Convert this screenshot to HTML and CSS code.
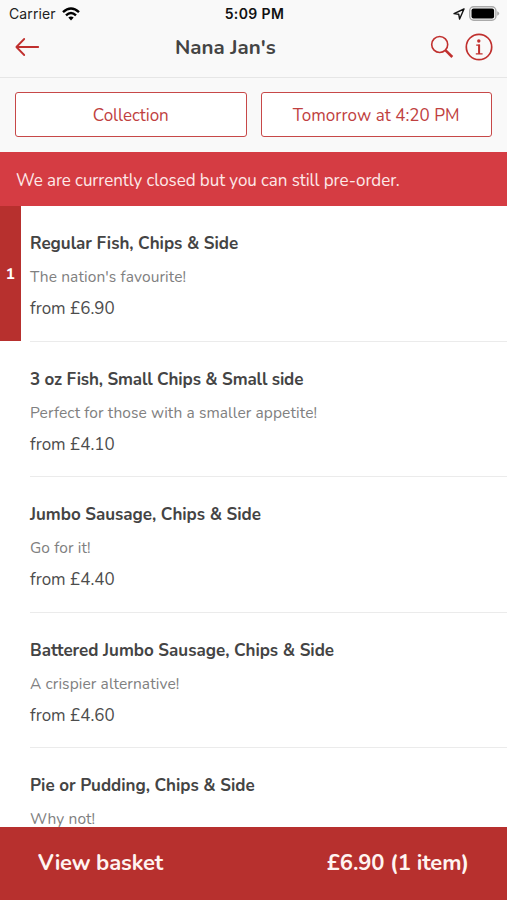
FILE: index.html
```html
<!DOCTYPE html>
<html lang="en">
<head>
<meta charset="utf-8">
<meta name="viewport" content="width=device-width, initial-scale=1">
<title>Nana Jan's</title>
<link rel="stylesheet" href="styles.css">
</head>
<body>
<div class="app">
  <header class="header">
    <div class="status">
      <div class="status-left">
        <span class="carrier">Carrier</span>
        <svg class="wifi" width="18" height="14" viewBox="0 0 18 14" fill="none" stroke="#000" stroke-width="2.4"><path d="M1 5.2Q9-2.4 17 5.2M4 8.3Q9 3.6 14 8.3"/><path d="M6.3 10.6Q9 8.4 11.7 10.6L9 13.4Z" fill="#000" stroke="none"/></svg>
      </div>
      <span class="time">5:09 PM</span>
      <div class="status-right">
        <svg width="12" height="12" viewBox="0 0 12 12" fill="none" stroke="#111" stroke-width="1.4" stroke-linejoin="round"><path d="M11 1L1 5.6L5.7 6.2L6.6 11Z"/></svg>
        <svg width="31" height="15" viewBox="0 0 31 15"><rect x=".7" y=".7" width="26.2" height="13.6" rx="4" fill="#fafafa" stroke="#aaa" stroke-width="1.4"/><rect x="2.5" y="2.5" width="22.6" height="10" rx="2" fill="#000"/><path d="M28.2 5.2Q30.2 6 30.2 7.5T28.2 9.8Z" fill="#aaa"/></svg>
      </div>
    </div>
    <nav class="nav">
      <svg class="back" width="26" height="20" viewBox="0 0 26 20" fill="none" stroke="#c0302e" stroke-width="1.8" stroke-linecap="round" stroke-linejoin="round"><path d="M23.2 10H1.8M9.2 2L1.4 10L9.2 18"/></svg>
      <h1 class="title">Nana Jan's</h1>
      <div class="actions">
        <svg width="24" height="24" viewBox="0 0 24 24" fill="none" stroke="#c0302e"><circle cx="9.7" cy="9.5" r="8" stroke-width="1.6"/><path d="M15.6 15.4L22.3 22" stroke-width="2.6"/></svg>
        <svg width="28" height="28" viewBox="0 0 28 28" fill="none" stroke="#c0302e"><circle cx="14" cy="14" r="12.7" stroke-width="1.7"/><circle cx="13.8" cy="8" r="1.7" fill="#c0302e" stroke="none"/><path d="M11.2 12.1H14.3V20.4M10.8 20.8H17.6" stroke-width="1.3"/><path d="M14.1 11.6V20.6" stroke-width="2"/></svg>
      </div>
    </nav>
  </header>
  <div class="options">
    <button class="option">Collection</button>
    <button class="option slot">Tomorrow at 4:20 PM</button>
  </div>
  <div class="notice">We are currently closed but you can still pre-order.</div>
  <main class="menu">
    <article class="item">
      <div class="count">1</div>
      <div class="body"><h2 class="name">Regular Fish, Chips &amp; Side</h2><p class="desc">The nation's favourite!</p><p class="price">from £6.90</p></div>
    </article>
    <article class="item">
      <div class="body"><h2 class="name compact">3 oz Fish, Small Chips &amp; Small side</h2><p class="desc">Perfect for those with a smaller appetite!</p><p class="price">from £4.10</p></div>
    </article>
    <article class="item">
      <div class="body"><h2 class="name">Jumbo Sausage, Chips &amp; Side</h2><p class="desc">Go for it!</p><p class="price">from £4.40</p></div>
    </article>
    <article class="item">
      <div class="body"><h2 class="name">Battered Jumbo Sausage, Chips &amp; Side</h2><p class="desc">A crispier alternative!</p><p class="price">from £4.60</p></div>
    </article>
    <article class="item">
      <div class="body"><h2 class="name">Pie or Pudding, Chips &amp; Side</h2><p class="desc">Why not!</p></div>
    </article>
  </main>
  <footer class="basket"><span class="view">View basket</span><span class="total">£6.90 (1 item)</span></footer>
</div>
</body>
</html>
```

FILE: styles.css
```css
* { box-sizing: border-box; }
body { margin: 0; font-family: Nunito, Lato, sans-serif; font-variant-ligatures: none; color: #444; background: #fff; }
h1, h2, p { margin: 0; white-space: nowrap; }
svg { display: block; flex: none; }
.app { width: 507px; height: 900px; display: flex; flex-direction: column; overflow: hidden; }
.header { height: 78px; flex: none; background: #f9f9f9; border-bottom: 1px solid #e6e6e6; }
.status { height: 27px; display: grid; grid-template-columns: 1fr auto 1fr; align-items: center; padding: 0 7px 0 9px; font-family: Inter, sans-serif; font-size: 14px; color: #222; }
.status-left { display: flex; gap: 6px; align-items: center; }
.carrier { font-size: 14px; letter-spacing: .1px; }
.time { font-weight: 600; color: #111; letter-spacing: .4px; }
.status-right { display: flex; justify-content: flex-end; align-items: center; gap: 4px; }
.nav { height: 40px; display: flex; align-items: center; padding: 0 14px 0 15px; }
.title { margin-left: 134px; font-size: 20.5px; line-height: 24px; font-weight: 700; }
.actions { margin-left: auto; display: flex; align-items: center; gap: 11px; }
.options { height: 74px; flex: none; display: grid; grid-template-columns: 1fr 1fr; gap: 14px; padding: 14px 15px 15px; background: #f9f9f9; }
.option { background: #fff; border: 1.5px solid #c74848; border-radius: 3px; padding: 2px 0 0; color: #c04040; font: 17px/22px Nunito, Lato, sans-serif; letter-spacing: -.05px; white-space: nowrap; }
.option.slot { letter-spacing: .05px; }
.notice { height: 54px; flex: none; display: flex; align-items: center; padding: 2px 16px 0; background: #d53c43; color: #fde9e8; font-size: 17px; letter-spacing: -.07px; white-space: nowrap; }
.menu { flex: 1; min-height: 0; overflow: hidden; }
.item { height: 135.6px; display: flex; position: relative; }
.count { width: 20.5px; height: 134.5px; position: absolute; left: 0; top: 0; display: flex; align-items: center; justify-content: center; padding-top: 2px; background: #b7302e; color: #fff; font-size: 16px; font-weight: 700; }
.body { margin-left: 30px; flex: 1; padding-top: 26px; border-bottom: 1.5px solid #ebebeb; }
.name { font-size: 17px; line-height: 24px; font-weight: 700; letter-spacing: -.02px; }
.name.compact { letter-spacing: -.12px; }
.desc { font-size: 15.5px; line-height: 22px; margin-top: 10px; color: #808080; letter-spacing: .1px; }
.price { font-size: 17px; line-height: 24px; margin-top: 9px; color: #4c4c4c; }
.basket { height: 73px; flex: none; display: flex; align-items: center; justify-content: space-between; padding: 0 38px 1px; background: #b7302e; color: #fff4f1; font-size: 22px; font-weight: 700; letter-spacing: -.15px; }
```
